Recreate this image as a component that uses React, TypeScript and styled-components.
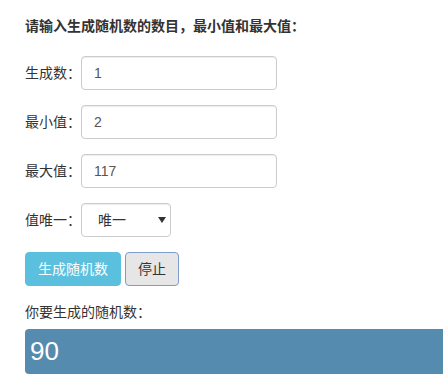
import React, {FC} from 'react';
import styled, {createGlobalStyle} from 'styled-components';

const GlobalStyle = createGlobalStyle`
    html, body {
        margin: 0;
        padding: 0;
        overflow: hidden;
        background: #fff;
    }
    body {
        font-family: "Liberation Sans", "Noto Sans CJK SC", sans-serif;
        font-size: 14px;
        line-height: 20px;
        color: #333;
    }
`;

const Page = styled.div`
    padding: 16px 0 0 25px;
`;
const Title = styled.div`
    font-weight: bold;
    margin-bottom: 20px;
`;
const FormRow = styled.div`
    display: flex;
    align-items: center;
    height: 34px;
    margin-bottom: 15px;
`;
const FieldLabel = styled.label`
    flex: 0 0 56px;
    color: #333;
`;
const TextInput = styled.input`
    box-sizing: border-box;
    width: 196px;
    height: 34px;
    padding: 6px 12px;
    font: inherit;
    color: #555;
    background: #fff;
    border: 1px solid #ccc;
    border-radius: 4px;
    box-shadow: inset 0 1px 1px rgba(0, 0, 0, 0.075);
    outline: none;
`;
const SelectWrap = styled.span`
    position: relative;
    display: inline-block;
`;
const Select = styled.select`
    box-sizing: border-box;
    width: 90px;
    height: 34px;
    padding: 0 0 0 16px;
    font: inherit;
    color: #333;
    background: #fff;
    border: 1px solid #ccc;
    border-radius: 4px;
    box-shadow: inset 0 1px 1px rgba(0, 0, 0, 0.075);
    appearance: none;
    outline: none;
`;
const Caret = styled.svg`
    position: absolute;
    left: 77px;
    top: 14px;
    pointer-events: none;
`;
const Actions = styled.div`
    display: flex;
    gap: 4px;
    height: 34px;
`;
const Button = styled.button<{$variant: 'info' | 'default'}>`
    box-sizing: border-box;
    height: 34px;
    padding: 6px 12px;
    font: inherit;
    border-radius: 4px;
    cursor: pointer;
    color: ${(p) => (p.$variant === 'info' ? '#fff' : '#333')};
    background: ${(p) => (p.$variant === 'info' ? '#5bc0de' : '#e6e6e6')};
    border: 1px solid ${(p) => (p.$variant === 'info' ? '#5bc0de' : '#7f9ccb')};
`;
const ResultLabel = styled.div`
    margin: 16px 0 7px;
`;
const Result = styled.div`
    box-sizing: border-box;
    width: 440px;
    height: 45px;
    padding: 0 5px;
    border-radius: 4px;
    background: #568bb0;
    color: #fff;
    font-size: 26px;
    line-height: 45px;
`;

interface Field {
    label: string;
    value: string;
}

const fields: Field[] = [
    {label: '生成数：', value: '1'},
    {label: '最小值：', value: '2'},
    {label: '最大值：', value: '117'},
];

const App: FC = () => {
    return (
        <>
            <GlobalStyle/>
            <Page>
                <Title>{'请输入生成随机数的数目，最小值和最大值：'}</Title>
                {fields.map((f) => (
                    <FormRow key={f.label}>
                        <FieldLabel>{f.label}</FieldLabel>
                        <TextInput
                            defaultValue={f.value}
                            readOnly={true}
                        />
                    </FormRow>
                ))}
                <FormRow>
                    <FieldLabel>{'值唯一：'}</FieldLabel>
                    <SelectWrap>
                        <Select defaultValue='1'>
                            <option value='1'>{'唯一'}</option>
                            <option value='0'>{'不唯一'}</option>
                        </Select>
                        <Caret
                            width='8'
                            height='6'
                            viewBox='0 0 8 6'
                        >
                            <path
                                d='M0 0 L8 0 L4 6 Z'
                                fill='#333'
                            />
                        </Caret>
                    </SelectWrap>
                </FormRow>
                <Actions>
                    <Button $variant='info'>{'生成随机数'}</Button>
                    <Button $variant='default'>{'停止'}</Button>
                </Actions>
                <ResultLabel>{'你要生成的随机数：'}</ResultLabel>
                <Result>{'90'}</Result>
            </Page>
        </>
    );
};

export default App;
